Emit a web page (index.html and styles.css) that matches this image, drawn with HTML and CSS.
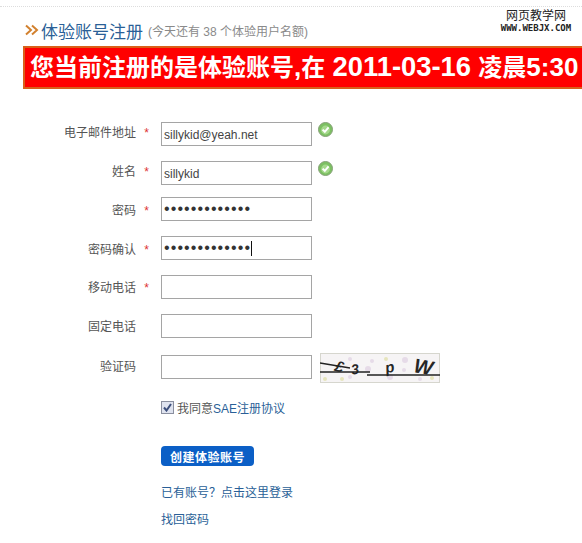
FILE: index.html
```html
<!DOCTYPE html>
<html lang="zh-CN">
<head>
    <meta charset="UTF-8">
    <title>体验账号注册</title>
    <link rel="stylesheet" href="styles.css">
</head>
<body>
    <div class="top-line"></div>
    <div class="watermark">
        <div class="wm-cn">网页教学网</div>
        <div class="wm-en">WWW.WEBJX.COM</div>
    </div>

    <div class="title">
        <svg class="arrows" width="14" height="12" viewBox="0 0 14 12">
            <path d="M1 1.5 L6 6 L1 10.5 M7 1.5 L12 6 L7 10.5" fill="none" stroke="#d2812f" stroke-width="2"/>
        </svg>
        <span class="title-main">体验账号注册</span>
        <span class="title-sub">(今天还有 38 个体验用户名额)</span>
    </div>

    <div class="notice"><span class="cjk">您当前注册的是体验账号</span>,<span class="cjk">在</span> <span class="date">2011-03-16</span> <span class="cjk">凌晨</span>5:30</div>

    <form class="form">
        <div class="row">
            <label class="label">电子邮件地址<span class="star">*</span></label>
            <div class="input">sillykid@yeah.net</div>
            <svg class="ok" width="15" height="15" viewBox="0 0 15 15">
                <circle cx="7.5" cy="7.5" r="7" fill="#7cc062" stroke="#86a078"/>
                <circle cx="7.5" cy="8" r="4.4" fill="#a5d88c"/>
                <path d="M4.6 7.6 L6.8 9.8 L10.6 5.4" fill="none" stroke="#fff" stroke-width="2"/>
            </svg>
        </div>
        <div class="row tight">
            <label class="label">姓名<span class="star">*</span></label>
            <div class="input">sillykid</div>
            <svg class="ok" width="15" height="15" viewBox="0 0 15 15">
                <circle cx="7.5" cy="7.5" r="7" fill="#7cc062" stroke="#86a078"/>
                <circle cx="7.5" cy="8" r="4.4" fill="#a5d88c"/>
                <path d="M4.6 7.6 L6.8 9.8 L10.6 5.4" fill="none" stroke="#fff" stroke-width="2"/>
            </svg>
        </div>
        <div class="row">
            <label class="label low">密码<span class="star">*</span></label>
            <div class="input dots">•••••••••••••</div>
        </div>
        <div class="row">
            <label class="label low">密码确认<span class="star">*</span></label>
            <div class="input dots">•••••••••••••<span class="caret"></span></div>
        </div>
        <div class="row">
            <label class="label mid">移动电话<span class="star">*</span></label>
            <div class="input"></div>
        </div>
        <div class="row wide">
            <label class="label mid">固定电话<span class="star blank">*</span></label>
            <div class="input"></div>
        </div>
        <div class="row">
            <label class="label near">验证码<span class="star blank">*</span></label>
            <div class="input"></div>
            <svg class="captcha" width="120" height="30" viewBox="0 0 120 30">
                <rect x="0.5" y="0.5" width="119" height="29" fill="#f6f4f5" stroke="#d6d6ce"/>
                <g fill="#e6dbe8">
                    <circle cx="30" cy="6" r="2"/><circle cx="30" cy="24" r="2"/><circle cx="48" cy="16" r="3"/>
                    <circle cx="52" cy="8" r="2"/><circle cx="70" cy="24" r="3"/><circle cx="85" cy="7" r="3"/>
                    <circle cx="84" cy="17" r="2"/><circle cx="100" cy="26" r="2"/>
                </g>
                <g fill="#e6e4bc">
                    <circle cx="5" cy="26" r="2"/><circle cx="22" cy="26" r="2"/><circle cx="66" cy="6" r="2"/><circle cx="112" cy="25" r="2"/>
                </g>
                <g fill="#262626" font-family="'Liberation Sans', sans-serif" font-weight="bold" font-style="italic">
                    <text x="15" y="19" font-size="15" transform="rotate(14 21 14)">£</text>
                    <text x="31" y="21" font-size="14" transform="rotate(-10 36 16)">3</text>
                    <text x="65" y="19" font-size="15" transform="rotate(-12 72 14)">p</text>
                    <text x="94" y="21" font-size="20" transform="rotate(10 105 14)">W</text>
                </g>
                <path d="M0 10 L30 15 M0 19 H50 M47 22 H120" fill="none" stroke="#222" stroke-width="1.4"/>
            </svg>
        </div>

        <div class="agree">
            <span class="checkbox">
                <svg width="9" height="9" viewBox="0 0 9 9"><path d="M1 4.5 L3.5 7.5 L8 1" fill="none" stroke="#3d4f7c" stroke-width="2"/></svg>
            </span>
            <span>我同意<a class="link" href="#">SAE注册协议</a></span>
        </div>

        <button class="submit" type="button">创建体验账号</button>

        <a class="link block first" href="#">已有账号？点击这里登录</a>
        <a class="link block" href="#">找回密码</a>
    </form>
</body>
</html>
```

FILE: styles.css
```css
body {
    margin: 0;
    height: 543px;
    overflow: hidden;
    background: #fff;
    color: #444;
    font-family: "Liberation Sans", "Noto Sans CJK SC", sans-serif;
    font-size: 12px;
}

.top-line {
    height: 6px;
    border-bottom: 1px dotted #ddd;
}

.watermark {
    position: absolute;
    top: 8px;
    left: 496px;
    width: 80px;
    text-align: center;
    color: #222;
}

.wm-cn {
    font-size: 12px;
    line-height: 16px;
}

.wm-en {
    font-family: "DejaVu Sans Mono", monospace;
    font-size: 9px;
    font-weight: bold;
    line-height: 9px;
    white-space: nowrap;
}

.title {
    display: flex;
    align-items: center;
    height: 24px;
    margin: 11px 0 0 25px;
}

.arrows {
    margin-right: 2px;
}

.title-main {
    color: #2a5f97;
    font-size: 17px;
}

.title-sub {
    margin-left: 5px;
    color: #8a8a8a;
    font-size: 12px;
}

.notice {
    box-sizing: border-box;
    width: 559px;
    height: 43px;
    margin: 4px 0 0 23px;
    padding-left: 5px;
    background: #f00;
    border: 2px solid #d9601a;
    border-right: none;
    color: #fff;
    font-size: 26px;
    font-weight: bold;
    line-height: 37px;
    white-space: nowrap;
}

.cjk {
    font-size: 24px;
}

.date {
    font-size: 27.4px;
}

.form {
    display: block;
    margin-top: 33px;
}

.row {
    display: flex;
    align-items: flex-start;
    height: 24px;
    margin-bottom: 15px;
}

.row.tight {
    margin-bottom: 12px;
}

.row.wide {
    margin-bottom: 17px;
}

.label {
    width: 149px;
    margin-right: 12px;
    line-height: 22px;
    text-align: right;
    color: #555;
}

.label.low {
    padding-top: 3px;
}

.label.mid {
    padding-top: 2px;
}

.label.near {
    padding-top: 1px;
}

.star {
    display: inline-block;
    width: 13px;
    color: #d33;
    text-align: right;
}

.star.blank {
    visibility: hidden;
}

.input {
    box-sizing: border-box;
    width: 151px;
    height: 24px;
    padding-left: 2px;
    background: #fff;
    border: 1px solid #a5a5a5;
    color: #444;
    line-height: 24px;
}

.dots {
    display: flex;
    align-items: center;
    color: #333;
    font-size: 16px;
    letter-spacing: 1.1px;
}

.caret {
    width: 1px;
    height: 15px;
    background: #111;
}

.ok {
    margin: 0 0 0 6px;
}

.captcha {
    margin: -2px 0 0 8px;
}

.agree {
    display: flex;
    align-items: center;
    height: 18px;
    margin: 19px 0 0 161px;
    color: #555;
}

.checkbox {
    box-sizing: border-box;
    display: flex;
    align-items: center;
    justify-content: center;
    width: 13px;
    height: 13px;
    margin-right: 3px;
    background: #dfe3ef;
    border: 1px solid #8a8f9f;
}

.link {
    color: #2a5f97;
    text-decoration: none;
}

.submit {
    display: block;
    width: 93px;
    height: 20px;
    margin: 30px 0 0 161px;
    padding: 0;
    background: #0b5fc6;
    border: none;
    border-radius: 4px;
    color: #fff;
    font-family: inherit;
    font-size: 12px;
    font-weight: bold;
    letter-spacing: 0.5px;
}

.block {
    display: block;
    margin: 10px 0 0 161px;
    line-height: 17px;
}

.block.first {
    margin-top: 19px;
}
```
